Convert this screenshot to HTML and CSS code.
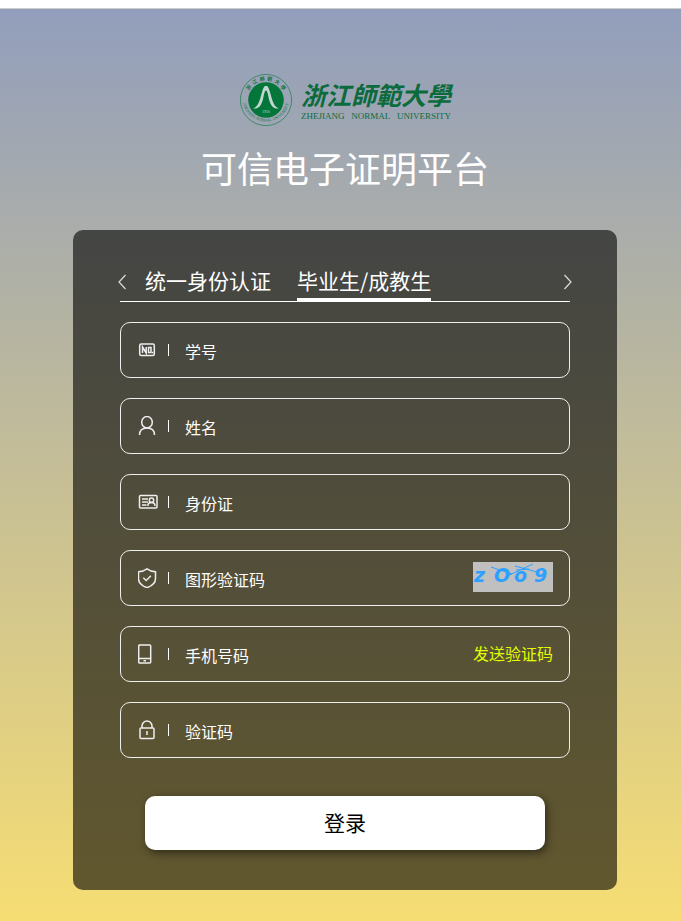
FILE: index.html
```
<!DOCTYPE html>
<html lang="zh-CN">
<head>
  <meta charset="UTF-8">
  <meta name="viewport" content="width=device-width, initial-scale=1.0">
  <title>可信电子证明平台</title>
  <link rel="stylesheet" href="styles.css">
</head>
<body>

<div class="topbar"></div>

<main class="page">
  <div class="logo">
    <svg class="emblem" width="54" height="54" viewBox="0 0 54 54" aria-hidden="true">
      <defs>
        <path id="arc-top" d="M7.500 27a19.500 19.500 0 0 1 39 0"/>
        <path id="arc-bottom" d="M3.500 25a23.500 23.500 0 1 0 47 0"/>
      </defs>
      <circle cx="27" cy="27" r="25.600" fill="none" stroke="#17804a" stroke-width=".7"/>
      <circle cx="27" cy="27" r="17.800" fill="#04763a"/>
      <path d="M14 35.500c4.500-1.500 6-6 7.500-11 1.400-5 2.300-9.500 4.200-11.500h2.600c1.900 2 2.800 6.500 4.200 11.500 1.500 5 3 9.500 7.500 11-5.500.8-8.300-3-9.800-8.500-1.100-4.200-1.500-9.500-3.200-9.500s-2.100 5.300-3.200 9.500c-1.500 5.500-4.300 9.300-9.800 8.500z" fill="#c3d6d0"/>
      <text class="emblem-year" x="27" y="40" text-anchor="middle">1956</text>
      <text class="emblem-cn"><textPath href="#arc-top" startOffset="50%" text-anchor="middle">浙 &#160;江 &#160;師 &#160;範 &#160;大 &#160;學</textPath></text>
      <text class="emblem-en"><textPath href="#arc-bottom" startOffset="50%" text-anchor="middle">ZHEJIANG NORMAL UNIVERSITY</textPath></text>
    </svg>
    <div class="logo-text">
      <div class="logo-cn">浙江師範大學</div>
      <div class="logo-en"><span>ZHEJIANG</span><span>NORMAL</span><span>UNIVERSITY</span></div>
    </div>
  </div>

  <h1>可信电子证明平台</h1>

  <form class="panel">
    <div class="tabs">
      <button type="button" class="arrow" aria-label="上一个">
        <svg width="8" height="16" viewBox="0 0 8 16"><path d="M7.500 1 1 8l6.500 7"/></svg>
      </button>
      <div class="tab-list">
        <button type="button" class="tab">统一身份认证</button>
        <button type="button" class="tab active">毕业生/成教生</button>
      </div>
      <button type="button" class="arrow" aria-label="下一个">
        <svg width="8" height="16" viewBox="0 0 8 16"><path d="M.5 1 7 8 .5 15"/></svg>
      </button>
    </div>

    <div class="fields">
      <div class="field">
        <label for="number" aria-label="学号">
          <svg class="icon" viewBox="0 0 20 20">
            <rect x="1.700" y="4" width="14.600" height="11.500" rx="1.500"/>
            <path d="M4.500 13V7l3.700 6V7M10.500 7.500h2.500v5h-2.500zM14.700 11.800v1.500"/>
          </svg>
        </label>
        <input type="text" id="number" placeholder="学号">
      </div>

      <div class="field">
        <label for="name" aria-label="姓名">
          <svg class="icon" viewBox="0 0 20 20">
            <ellipse cx="9" cy="6.200" rx="5.300" ry="5.700"/>
            <path d="M1.500 19c0-4 2.500-7 7.500-7s7.500 3 7.500 7"/>
          </svg>
        </label>
        <input type="text" id="name" placeholder="姓名">
      </div>

      <div class="field">
        <label for="idcard" aria-label="身份证">
          <svg class="icon" viewBox="0 0 20 20">
            <rect x="1.500" y="3.500" width="17.500" height="12.500" rx="1"/>
            <path d="M4 7h6M4 10h6M4 13h4.500M9.800 14c0-2.300 1.500-3.500 3.700-3.500s3.500 1.200 3.500 3.500"/>
            <circle cx="13.500" cy="8.200" r="2.200"/>
          </svg>
        </label>
        <input type="text" id="idcard" placeholder="身份证">
      </div>

      <div class="field">
        <label for="captcha" aria-label="图形验证码">
          <svg class="icon" viewBox="0 0 20 20">
            <path d="M9 .8c2.300 1.700 5 2.700 8.500 2.900v7c0 4.300-3.800 7.200-8.500 9-4.700-1.800-8.500-4.700-8.500-9v-7C4 3.500 6.700 2.500 9 .8z"/>
            <path d="m5.300 9.700 2.900 2.800 4.700-4.800"/>
          </svg>
        </label>
        <input type="text" id="captcha" placeholder="图形验证码">
        <button type="button" class="captcha" aria-label="换一张">
          <svg width="80" height="30" viewBox="0 0 80 30">
            <text x="1" y="20">z</text>
            <text x="21" y="20">O</text>
            <text x="41" y="20">o</text>
            <text x="61" y="20">9</text>
            <path d="M18 5l21 7M32 15l28-13M42 4l22 6M43 8l13-1"/>
          </svg>
        </button>
      </div>

      <div class="field">
        <label for="phone" aria-label="手机号码">
          <svg class="icon" viewBox="0 0 20 20">
            <rect x=".7" y="1" width="12" height="18" rx="1"/>
            <path d="M1 14.500h12M5.500 16.800h2.500"/>
          </svg>
        </label>
        <input type="tel" id="phone" placeholder="手机号码">
        <button type="button" class="send">发送验证码</button>
      </div>

      <div class="field">
        <label for="code" aria-label="验证码">
          <svg class="icon" viewBox="0 0 20 20">
            <rect x="2" y="8" width="14" height="10.500" rx="1"/>
            <path d="M4 8V6a5 5 0 0 1 10 0v2M9 11v4"/>
          </svg>
        </label>
        <input type="text" id="code" placeholder="验证码">
      </div>
    </div>

    <button type="submit" class="login">登录</button>
  </form>
</main>

</body>
</html>
```

FILE: styles.css
```
* {
  box-sizing: border-box;
}

body {
  margin: 0;
  font-family: "Noto Sans CJK SC", sans-serif;
  color: #fff;
}

button {
  padding: 0;
  border: none;
  background: none;
  font-family: inherit;
  color: inherit;
  cursor: pointer;
}

.topbar {
  height: 9px;
  background-color: #fff;
  border-bottom: 1px solid #ccc;
}

.page {
  display: flex;
  flex-direction: column;
  align-items: center;
  min-height: calc(100vh - 9px);
  padding: 64px 0 31px 9px;
  background: linear-gradient(#929ebc, #f6dd73);
}

/* logo */
.logo {
  display: flex;
  align-items: center;
  gap: 8px;
  color: #0b6b3c;
}

.emblem {
  display: block;
}

.emblem text {
  fill: #0b7340;
}

.emblem-cn {
  font-size: 5px;
  font-weight: bold;
}

.emblem-en {
  font-family: "Liberation Serif", serif;
  font-size: 4px;
}

.emblem .emblem-year {
  font-family: "Liberation Serif", serif;
  font-size: 4px;
  fill: #c3d6d0;
}

.logo-text {
  width: 150px;
}

.logo-cn {
  display: flex;
  justify-content: space-between;
  font-family: "Noto Sans CJK TC", sans-serif;
  font-size: 25px;
  font-weight: bold;
  font-style: italic;
  line-height: 32px;
}

.logo-en {
  display: flex;
  justify-content: space-between;
  font-family: "Liberation Serif", serif;
  font-size: 9px;
  line-height: 12px;
}

h1 {
  margin: 14px 0 37px;
  font-size: 36px;
  font-weight: normal;
  line-height: 52px;
}

/* login panel */
.panel {
  width: 100%;
  max-width: 544px;
  padding: 34px 47px 40px;
  border-radius: 10px;
  background-color: rgba(0, 0, 0, 0.6);
}

.tabs {
  display: flex;
  align-items: center;
  border-bottom: 1px solid #fff;
}

.arrow {
  display: flex;
  margin: 0 -2px;
  padding-bottom: 2px;
}

.arrow svg {
  fill: none;
  stroke: #ddd;
  stroke-width: 1.2;
}

.tab-list {
  display: flex;
  flex: 1;
  gap: 26px;
  padding-left: 21px;
}

.tab {
  height: 38px;
  margin-bottom: -1px;
  padding-bottom: 2px;
  border-bottom: 4px solid transparent;
  font-size: 21px;
  line-height: 32px;
}

.tab.active {
  border-bottom-color: #fff;
}

.fields {
  display: flex;
  flex-direction: column;
  gap: 20px;
  padding: 20px 0 38px;
}

.field {
  display: flex;
  align-items: center;
  height: 56px;
  padding: 0 16px 0 17px;
  border: 1px solid #eee;
  border-radius: 10px;
}

.field label {
  display: flex;
  align-items: center;
  padding-right: 15px;
}

.field label::after {
  content: "";
  width: 1px;
  height: 12px;
  margin-left: 10px;
  background-color: #fff;
}

.icon {
  width: 20px;
  height: 20px;
  margin-bottom: 1px;
  fill: none;
  stroke: #eee;
  stroke-width: 1.5;
}

.field input {
  flex: 1;
  min-width: 0;
  height: 100%;
  padding: 2px 0 0 1px;
  border: none;
  outline: none;
  background: none;
  font-family: inherit;
  font-size: 16px;
  color: #fff;
}

.field input::placeholder {
  color: #fff;
  opacity: 1;
}

.captcha,
.send {
  margin-bottom: 2px;
}

.captcha svg {
  display: block;
  background-color: #c0c0c0;
  fill: none;
  stroke: #2ea0ff;
}

.captcha text {
  font-family: "DejaVu Sans", sans-serif;
  font-size: 19px;
  font-style: italic;
  font-weight: bold;
  fill: #2ea0ff;
  stroke: none;
}

.send {
  font-size: 16px;
  color: #e1ff00;
}

.login {
  display: block;
  width: calc(100% - 50px);
  height: 54px;
  margin: 0 auto;
  padding-bottom: 2px;
  border-radius: 10px;
  background-color: #fff;
  box-shadow: 2px 3px 8px rgba(0, 0, 0, 0.5);
  font-size: 21px;
  color: #000;
}
```
